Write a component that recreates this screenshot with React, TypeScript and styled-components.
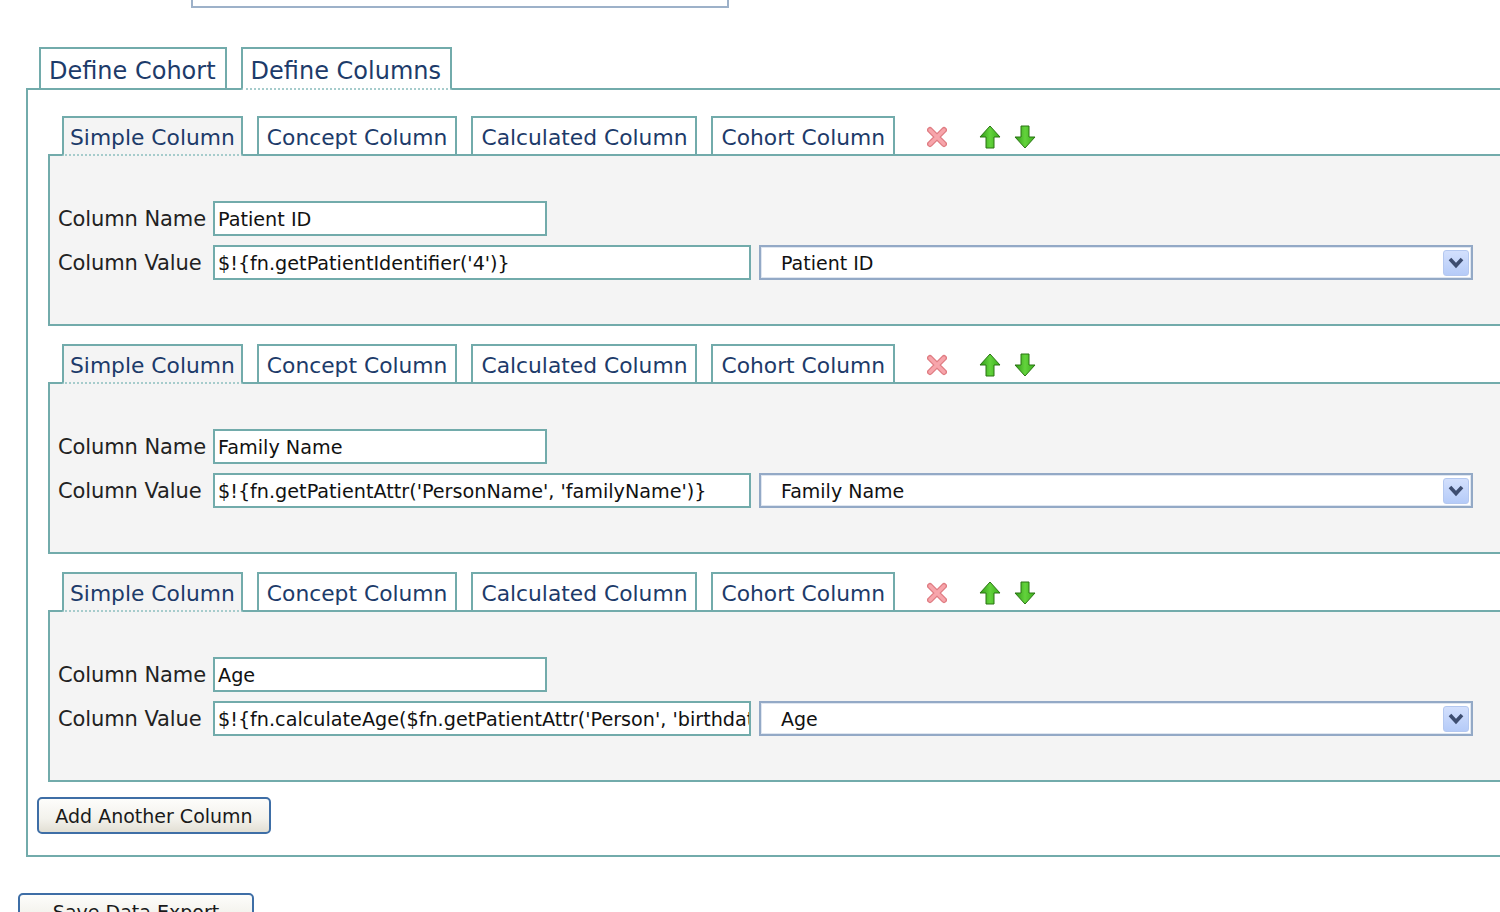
import React from "react";
import styled, { createGlobalStyle, css } from "styled-components";

const TEAL = "#72abab";
const TAB_TEXT = "#1d3b6a";

const GlobalStyle = createGlobalStyle`
  html, body {
    margin: 0;
    padding: 0;
    background: #ffffff;
    overflow: hidden;
  }
  body {
    font-family: "DejaVu Sans", "Liberation Sans", sans-serif;
    color: #222;
  }
`;

const Page = styled.div`
  width: 1500px;
  height: 912px;
  overflow: hidden;
`;

const TopField = styled.div`
  margin-left: 191px;
  width: 534px;
  height: 6px;
  border: 2px solid #9db1c9;
  border-top: none;
  background: #fff;
`;

const Main = styled.div`
  margin: 39px 0 0 26px;
`;

const OuterTabRow = styled.div`
  display: flex;
  align-items: flex-end;
  gap: 14px;
  padding-left: 13px;
`;

const OuterTab = styled.div<{ $active?: boolean }>`
  position: relative;
  z-index: 1;
  height: 39px;
  line-height: 45px;
  padding: 0 9px 0 8px;
  border: 2px solid ${TEAL};
  border-bottom: none;
  background: #fff;
  color: ${TAB_TEXT};
  font-size: 24px;
  white-space: nowrap;
  ${(p) =>
    p.$active &&
    css`
      border-bottom: 2px dotted #a6cccc;
      margin-bottom: -2px;
    `}
`;

const OuterPanel = styled.div`
  width: 1500px;
  border: 2px solid ${TEAL};
  border-right: none;
  padding: 26px 0 21px 9px;
  background: #fff;
`;

const Block = styled.div`
  padding-left: 11px;
  margin-bottom: 18px;
  &:last-of-type {
    margin-bottom: 15px;
  }
`;

const InnerTabRow = styled.div`
  display: flex;
  align-items: flex-end;
  gap: 14px;
  padding-left: 14px;
`;

const InnerTab = styled.div<{ $active?: boolean }>`
  position: relative;
  z-index: 1;
  height: 36px;
  line-height: 40px;
  padding: 0 ${(p) => (p.$active ? 6 : 8)}px;
  border: 2px solid ${TEAL};
  border-bottom: none;
  background: ${(p) => (p.$active ? "#f4f4f4" : "#fff")};
  color: ${TAB_TEXT};
  font-size: 21.8px;
  white-space: nowrap;
  ${(p) =>
    p.$active &&
    css`
      border-bottom: 2px dotted #a6cccc;
      margin-bottom: -2px;
    `}
`;

const IconGroup = styled.div`
  display: flex;
  align-items: center;
  align-self: center;
  margin-top: 4px;
  margin-left: 18px;
`;

const IconButton = styled.span<{ $gap?: number }>`
  display: inline-flex;
  margin-left: ${(p) => p.$gap ?? 0}px;
`;

const InnerPanel = styled.div`
  width: 1450px;
  border: 2px solid ${TEAL};
  background: #f4f4f4;
  padding: 45px 0 44px 8px;
`;

const FieldGrid = styled.div`
  display: grid;
  grid-template-columns: 155px auto 1fr;
  row-gap: 9px;
  align-items: center;
`;

const Label = styled.label`
  font-size: 21px;
  color: #222;
  white-space: nowrap;
  letter-spacing: -0.1px;
`;

const TextBox = styled.div<{ $w: number; $span?: boolean }>`
  box-sizing: border-box;
  width: ${(p) => p.$w}px;
  height: 35px;
  border: 2px solid ${TEAL};
  background: #fff;
  padding-left: 3px;
  font-size: 19.2px;
  line-height: 33px;
  color: #111;
  white-space: nowrap;
  overflow: hidden;
  text-overflow: clip;
  ${(p) =>
    p.$span &&
    css`
      grid-column: 2 / span 2;
    `}
`;

const SelectBox = styled.div`
  box-sizing: border-box;
  margin-left: 8px;
  width: 714px;
  height: 35px;
  border: 2px solid #93a9c6;
  box-shadow: inset 0 0 0 1px #dfe6f0;
  background: #fff;
  display: flex;
  align-items: center;
  justify-content: space-between;
  padding: 0 2px 0 20px;
  font-size: 19px;
  color: #111;
`;

const SelectArrow = styled.span`
  display: inline-flex;
  align-items: center;
  justify-content: center;
  width: 26px;
  height: 26px;
  border-radius: 3px;
  background: linear-gradient(#d3e0fd, #b5cbf8);
  border: 1px solid #b4c8f0;
  box-sizing: border-box;
`;

const XpButton = styled.button<{ $w: number; $ml: number }>`
  display: block;
  box-sizing: border-box;
  width: ${(p) => p.$w}px;
  height: 37px;
  margin-left: ${(p) => p.$ml}px;
  border: 2px solid #3e6ea6;
  border-radius: 5px;
  background: linear-gradient(#fdfdfb 0%, #f3f2ec 60%, #e2dfd4 100%);
  font-family: "DejaVu Sans", "Liberation Sans", sans-serif;
  font-size: 19px;
  color: #1a1a1a;
  padding: 0;
  cursor: pointer;
`;

const SaveButton = styled(XpButton)`
  margin-top: 36px;
`;

const CloseIcon = () => (
  <svg width="20" height="22" viewBox="0 0 20 22">
    <path d="M3 4 L17 18 M17 4 L3 18" stroke="#df7c82" strokeWidth="6" strokeLinecap="round" />
    <path d="M3 4 L17 18 M17 4 L3 18" stroke="#f7a5ab" strokeWidth="3.4" strokeLinecap="round" />
  </svg>
);

const UpIcon = () => (
  <svg width="22" height="24" viewBox="0 0 22 24">
    <defs>
      <linearGradient id="gup" x1="0" y1="0" x2="1" y2="0">
        <stop offset="0" stopColor="#2f9a16" />
        <stop offset="0.5" stopColor="#63d33c" />
        <stop offset="1" stopColor="#3aae1c" />
      </linearGradient>
    </defs>
    <polygon
      points="11,1 21,12 15,12 15,23 7,23 7,12 1,12"
      fill="url(#gup)"
      stroke="#2a7413"
      strokeWidth="1"
      strokeLinejoin="round"
    />
  </svg>
);

const DownIcon = () => (
  <svg width="22" height="24" viewBox="0 0 22 24">
    <defs>
      <linearGradient id="gdn" x1="0" y1="0" x2="1" y2="0">
        <stop offset="0" stopColor="#2f9a16" />
        <stop offset="0.5" stopColor="#63d33c" />
        <stop offset="1" stopColor="#3aae1c" />
      </linearGradient>
    </defs>
    <polygon
      points="7,1 15,1 15,12 21,12 11,23 1,12 7,12"
      fill="url(#gdn)"
      stroke="#2a7413"
      strokeWidth="1"
      strokeLinejoin="round"
    />
  </svg>
);

const Chevron = () => (
  <svg width="16" height="12" viewBox="0 0 16 12">
    <path d="M2 2 L8 8.5 L14 2" fill="none" stroke="#3d4d70" strokeWidth="3.6" strokeLinejoin="miter" />
  </svg>
);

type Col = { name: string; value: string; select: string };

const columns: Col[] = [
  { name: "Patient ID", value: "$!{fn.getPatientIdentifier('4')}", select: "Patient ID" },
  { name: "Family Name", value: "$!{fn.getPatientAttr('PersonName', 'familyName')}", select: "Family Name" },
  {
    name: "Age",
    value: "$!{fn.calculateAge($fn.getPatientAttr('Person', 'birthdate'))}",
    select: "Age",
  },
];

const tabNames = ["Simple Column", "Concept Column", "Calculated Column", "Cohort Column"];

const ColumnBlock: React.FC<{ col: Col }> = ({ col }) => (
  <Block>
    <InnerTabRow>
      {tabNames.map((t, i) => (
        <InnerTab key={t} $active={i === 0}>
          {t}
        </InnerTab>
      ))}
      <IconGroup>
        <IconButton>
          <CloseIcon />
        </IconButton>
        <IconButton $gap={32}>
          <UpIcon />
        </IconButton>
        <IconButton $gap={13}>
          <DownIcon />
        </IconButton>
      </IconGroup>
    </InnerTabRow>
    <InnerPanel>
      <FieldGrid>
        <Label>Column Name</Label>
        <TextBox $w={334} $span>
          {col.name}
        </TextBox>
        <Label>Column Value</Label>
        <TextBox $w={538}>{col.value}</TextBox>
        <SelectBox>
          <span>{col.select}</span>
          <SelectArrow>
            <Chevron />
          </SelectArrow>
        </SelectBox>
      </FieldGrid>
    </InnerPanel>
  </Block>
);

export default function App() {
  return (
    <Page>
      <GlobalStyle />
      <TopField />
      <Main>
        <OuterTabRow>
          <OuterTab>Define Cohort</OuterTab>
          <OuterTab $active>Define Columns</OuterTab>
        </OuterTabRow>
        <OuterPanel>
          {columns.map((c) => (
            <ColumnBlock key={c.name} col={c} />
          ))}
          <XpButton $w={234} $ml={0}>
            Add Another Column
          </XpButton>
        </OuterPanel>
      </Main>
      <SaveButton $w={236} $ml={18}>
        Save Data Export
      </SaveButton>
    </Page>
  );
}
